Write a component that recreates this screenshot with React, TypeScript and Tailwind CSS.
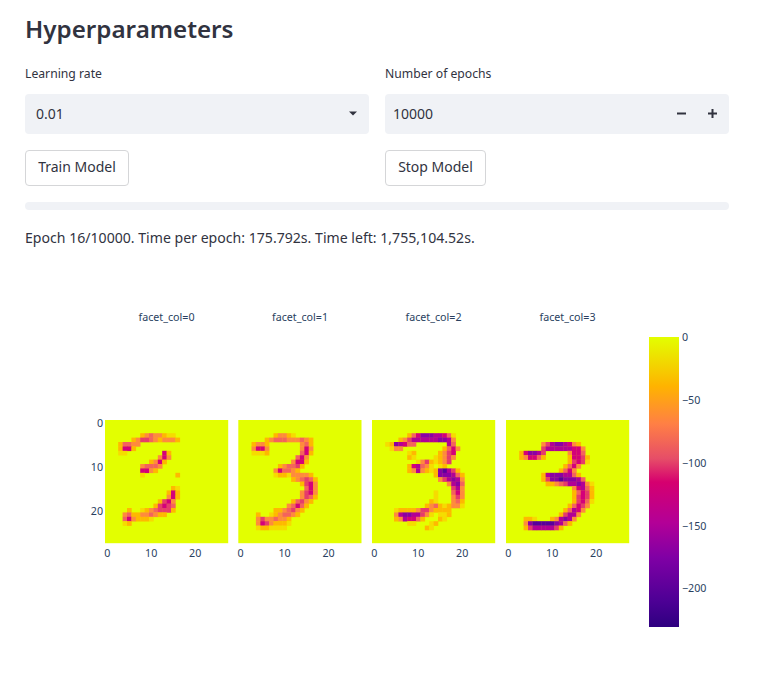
import React from "react";

// intensity levels used by the heatmap cells, "." is the background
const LEVELS: Record<string, string> = {
    "1": "#f6dc00",
    "2": "#ffb800",
    "3": "#ff8a3c",
    "4": "#f4645c",
    "5": "#e63a6c",
    "6": "#d4007a",
    "7": "#b20096",
    "8": "#8a00a4",
    "9": "#58009c",
};

const FACETS: { left: number; rows: string[] }[] = [
    {
        left: 105,
        rows: [
            "",
            "",
            "",
            "........23433211",
            "......23554323332",
            "...24433",
            "...2662",
            "...11........62",
            "............363",
            "..........2362",
            "........34443",
            "........6632",
            "........1.......2",
            "",
            "",
            "...............21",
            "..............262",
            "..............362",
            "............2563",
            "...........25654",
            ".....2..12345552",
            "....3422334322",
            "....4632221",
            "....12",
        ],
    },
    {
        left: 238.3,
        rows: [
            "",
            "",
            "",
            "........23321",
            "......23444333432",
            "...2332.......342",
            "...3663.......363",
            "...1112.......462",
            ".............463",
            "............3662",
            ".........234452",
            "........364432",
            "........122133332",
            "............234542",
            "..............2563",
            "...............463",
            "..............3563",
            "..............3542",
            "............24532",
            "...........34642",
            "........2234532",
            "....2..1234432",
            "....35334332",
            "....36532221",
            "....1221111",
        ],
    },
    {
        left: 372,
        rows: [
            "",
            "",
            "",
            "........24688877641",
            "......2357777778873",
            "...1287644.......74",
            "....133.........2463",
            "........12.....2356",
            "........21....12353",
            "..........13521235",
            "........267431.12",
            "........237321289752",
            "..............2888742",
            "...............357873",
            ".................3784",
            "..................573",
            "..............1...463",
            "..............1...353",
            ".............21...342",
            "............234212331",
            ".....1222235532222",
            ".....378877531.112",
            ".....2376642...21",
            "........11...12",
            "............21",
        ],
    },
    {
        left: 506,
        rows: [
            "",
            "",
            "",
            "",
            "",
            "........357887632",
            "........5777777663",
            "...268875.....3664",
            "...236642.....26652",
            "..............25651",
            ".............2463",
            "............2463",
            "........278887742",
            "........2588988874",
            ".........22345778731",
            "...............36742",
            "...............24652",
            "...............25652",
            "...............25641",
            "..............24653",
            ".............24763",
            "............25773",
            "....221...237873",
            "....38999998742",
            "....257777752",
        ],
    },
];

const CELL = 123.2 / 28;
const TOP = 420;

function Heatmap({ left, rows }: { left: number; rows: string[] }) {
    return (
        <g>
            <rect x={left} y={TOP} width={123.2} height={123.2} fill="#e3ff00" />
            <g filter="url(#soft)">
                {rows.map((row, r) =>
                    row.split("").map((c, i) =>
                        LEVELS[c] ? (
                            <rect
                                key={`${r}-${i}`}
                                x={left + i * CELL}
                                y={TOP + r * CELL}
                                width={CELL + 0.3}
                                height={CELL + 0.3}
                                fill={LEVELS[c]}
                            />
                        ) : null
                    )
                )}
            </g>
            {[0, 10, 20].map((t) => (
                <text key={t} x={left + CELL / 2 + t * CELL} y={557} textAnchor="middle">
                    {t}
                </text>
            ))}
        </g>
    );
}

function Chart() {
    return (
        <svg
            viewBox="25 270 704 380"
            width={704}
            height={380}
            className="block fill-[#2a3f5f] text-[10.7px]"
            style={{ fontFamily: '"Noto Sans", sans-serif' }}
        >
            <defs>
                <linearGradient id="bar" x1="0" y1="0" x2="0" y2="1">
                    <stop offset="0" stopColor="#e3ff00" />
                    <stop offset="0.17" stopColor="#ffb300" />
                    <stop offset="0.3" stopColor="#ff7f45" />
                    <stop offset="0.42" stopColor="#e64d68" />
                    <stop offset="0.5" stopColor="#d6006f" />
                    <stop offset="0.64" stopColor="#b30097" />
                    <stop offset="0.76" stopColor="#8000a5" />
                    <stop offset="0.91" stopColor="#4d0095" />
                    <stop offset="1" stopColor="#2e0080" />
                </linearGradient>
                <filter id="soft" x="-5%" y="-5%" width="110%" height="110%">
                    <feGaussianBlur stdDeviation="0.5" />
                </filter>
            </defs>
            {["facet_col=0", "facet_col=1", "facet_col=2", "facet_col=3"].map((t, i) => (
                <text key={t} x={[166.5, 300, 433.5, 567.5][i]} y={320.5} textAnchor="middle">
                    {t}
                </text>
            ))}
            {FACETS.map((f) => (
                <Heatmap key={f.left} left={f.left} rows={f.rows} />
            ))}
            {[0, 10, 20].map((t) => (
                <text key={t} x={103} y={427 + t * CELL} textAnchor="end">
                    {t}
                </text>
            ))}
            <rect x={649} y={337} width={30} height={290} fill="url(#bar)" />
            {[
                ["0", 341],
                ["−50", 404],
                ["−100", 467],
                ["−150", 530],
                ["−200", 592],
            ].map(([t, y]) => (
                <text key={t} x={682} y={y}>
                    {t}
                </text>
            ))}
        </svg>
    );
}

export default function App() {
    return (
        <div
            className="w-[768px] h-[677px] overflow-hidden bg-white pl-[25px] pr-[39px] pt-[11px] text-[#31333f]"
            style={{ fontFamily: '"Noto Sans", sans-serif' }}
        >
            <h2 className="text-[24.2px] leading-[35px] font-semibold">Hyperparameters</h2>
            <div className="mt-[18px] grid grid-cols-2 gap-4">
                <div>
                    <label className="block text-[12.2px] leading-[20px]">Learning rate</label>
                    <div className="mt-[10px] flex h-10 items-center justify-between rounded bg-[#f0f2f6] pb-px pl-[11px] pr-[12px] text-[14px]">
                        <span>0.01</span>
                        <svg width="8" height="5" viewBox="0 0 8 5" className="fill-[#31333f]">
                            <path d="M0 0.5h8L4 4.5z" />
                        </svg>
                    </div>
                    <button className="mt-4 block h-9 w-[104px] rounded border border-[#d5d6d8] bg-white pb-[3px] text-[14px]">
                        Train Model
                    </button>
                </div>
                <div>
                    <label className="block text-[12.2px] leading-[20px]">Number of epochs</label>
                    <div className="mt-[10px] flex h-10 items-center justify-between rounded bg-[#f0f2f6] pb-px pl-2 pr-3 text-[14px]">
                        <span>10000</span>
                        <div className="flex items-center gap-[22px]">
                            <svg width="9" height="9" viewBox="0 0 9 9" className="fill-[#31333f]">
                                <rect x="0" y="3.5" width="9" height="2" />
                            </svg>
                            <svg width="9" height="9" viewBox="0 0 9 9" className="fill-[#31333f]">
                                <rect x="0" y="3.5" width="9" height="2" />
                                <rect x="3.5" y="0" width="2" height="9" />
                            </svg>
                        </div>
                    </div>
                    <button className="mt-4 block h-9 w-[101px] rounded border border-[#d5d6d8] bg-white pb-[3px] text-[14px]">
                        Stop Model
                    </button>
                </div>
            </div>
            <div className="mt-4 h-2 rounded bg-[#f0f2f6]" />
            <p className="mt-4 text-[14.1px] leading-[24px]">
                Epoch 16/10000. Time per epoch: 175.792s. Time left: 1,755,104.52s.
            </p>
            <div className="mt-5">
                <Chart />
            </div>
        </div>
    );
}
